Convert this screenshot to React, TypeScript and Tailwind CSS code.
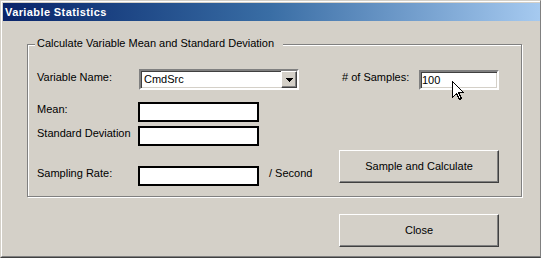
const sunken =
  'border-2 border-t-[#808080] border-l-[#808080] border-r-white border-b-white shadow-[inset_1px_1px_0_#404040,inset_-1px_-1px_0_#d4d0c8]';

const raised =
  'border border-t-white border-l-white border-r-[#404040] border-b-[#404040] shadow-[inset_-1px_-1px_0_#808080] bg-[#d4d0c8]';

const FlatBox = ({ className = '' }: { className?: string }) => (
  <div className={`h-[20px] w-[121px] border-2 border-black bg-white ${className}`} />
);

const Cursor = () => (
  <svg width="13" height="20" viewBox="0 0 13 20" className="absolute left-[451px] top-[80px]">
    <path
      d="M0.5 0.5 L0.5 16.5 L4.5 12.5 L7.5 18.5 L9.5 17.5 L6.5 11.5 L11.5 11.5 Z"
      fill="#fff"
      stroke="#000"
      strokeWidth="1"
      shapeRendering="crispEdges"
    />
  </svg>
);

export default function App() {
  return (
    <div className="relative w-[541px] h-[258px] bg-[#d4d0c8] border-t border-l border-t-[#d4d0c8] border-l-[#d4d0c8] border-r border-r-[#808080] border-b border-b-[#404040] font-['Liberation_Sans',Arial,sans-serif] text-[11px] leading-[13px] text-black overflow-hidden">
      <div className="h-full flex flex-col border-t border-l border-t-white border-l-white border-b border-b-[#808080] pt-px pl-px">
        {/* title bar */}
        <div className="h-[18px] flex items-center pl-[2px] bg-linear-to-r from-[#0a246a] via-[#3a6ea5] to-[#a6caf0]">
          <span className="text-white font-bold text-[11px] tracking-[0.4px]">Variable Statistics</span>
        </div>

        <div className="flex flex-col pl-[24px]">
          {/* group box */}
          <div className="relative mt-[23px] w-[495px] h-[153px] border border-[#808080] shadow-[inset_1px_1px_0_#fff,1px_1px_0_#fff] flex pl-[9px] pt-[24px] pb-[10px]">
            <span className="absolute left-[7px] top-[-8px] w-[248px] pl-[2px] bg-[#d4d0c8]">
              Calculate Variable Mean and Standard Deviation
            </span>

            {/* left column */}
            <div className="w-[302px] flex flex-col">
              <div className="h-[21px] flex items-start">
                <span className="w-[102px] pt-[2px]">Variable Name:</span>
                <div className={`relative w-[160px] h-[21px] bg-white flex items-center ${sunken}`}>
                  <span className="pl-[3px]">CmdSrc</span>
                  <div className={`absolute right-0 top-0 w-[16px] h-[17px] flex items-center justify-center ${raised}`}>
                    <svg width="7" height="4" viewBox="0 0 7 4">
                      <path d="M0 0 H7 L3.5 4 Z" fill="#000" shapeRendering="crispEdges" />
                    </svg>
                  </div>
                </div>
              </div>

              <div className="mt-[12px] h-[20px] flex items-start">
                <span className="w-[101px] pt-[1px]">Mean:</span>
                <FlatBox />
              </div>

              <div className="mt-[4px] h-[20px] flex items-start">
                <span className="w-[101px] pt-[1px]">Standard Deviation</span>
                <FlatBox />
              </div>

              <div className="mt-[20px] h-[20px] flex items-start">
                <span className="w-[101px] pt-[1px]">Sampling Rate:</span>
                <FlatBox />
                <span className="ml-[10px] pt-[1px]">/ Second</span>
              </div>
            </div>

            {/* right column */}
            <div className="w-[160px] flex flex-col">
              <div className="mt-px h-[20px] flex items-start justify-between">
                <span className="pl-[3px] pt-[1px]">
                  # of Samples:
                </span>
                <div className={`w-[80px] h-[20px] bg-white flex items-center ${sunken}`}>
                  <span className="pl-px">100</span>
                </div>
              </div>
              <button className={`mt-auto mb-[3px] w-[160px] h-[33px] flex items-center justify-center ${raised}`}>
                Sample and Calculate
              </button>
            </div>
          </div>

          <button className={`mt-[17px] ml-[312px] w-[160px] h-[33px] flex items-center justify-center ${raised}`}>
            Close
          </button>
        </div>
      </div>
      <Cursor />
    </div>
  );
}
